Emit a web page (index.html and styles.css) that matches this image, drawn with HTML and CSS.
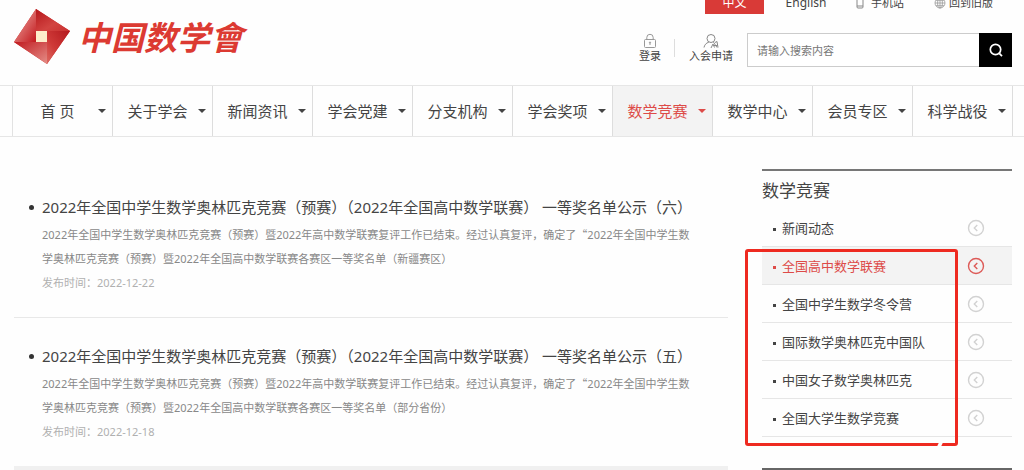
FILE: index.html
```html
<!DOCTYPE html>
<html lang="zh-CN">
<head>
  <meta charset="UTF-8">
  <meta name="viewport" content="width=device-width, initial-scale=1.0">
  <title>中国数学会</title>
  <link rel="stylesheet" href="styles.css">
</head>
<body>
  <div class="page">
    <header class="header">
      <a class="logo" href="#">
        <svg class="logo-mark" viewBox="0 0 56 56" width="56" height="56" aria-hidden="true">
          <defs>
            <linearGradient id="g1" x1="1" y1="0" x2="0" y2="1"><stop offset="0" stop-color="#b3181d"/><stop offset=".6" stop-color="#cf3a38"/><stop offset="1" stop-color="#dd6a62"/></linearGradient>
            <linearGradient id="g2" x1="0" y1="0" x2="1" y2="1"><stop offset=".2" stop-color="#e99590"/><stop offset="1" stop-color="#c2181d"/></linearGradient>
            <linearGradient id="g3" x1="0" y1="0" x2="1" y2="1"><stop offset="0" stop-color="#b5161b"/><stop offset=".6" stop-color="#d24441"/><stop offset="1" stop-color="#c9302f"/></linearGradient>
            <linearGradient id="g4" x1="0" y1="0" x2="1" y2="1"><stop offset="0" stop-color="#c01a1f"/><stop offset="1" stop-color="#e58f88"/></linearGradient>
          </defs>
          <path d="M22 0 56 22 33 55 0 33z" fill="#cb2628"/>
          <path d="M22 0V33H0z" fill="url(#g2)"/>
          <path d="M22 0 56 22H22z" fill="url(#g3)"/>
          <path d="M56 22 33 55V22z" fill="url(#g1)"/>
          <path d="M0 33H33V55z" fill="url(#g4)"/>
          <path d="M22 22H33V33H22z" fill="#fdeecb"/>
        </svg>
        <span class="logo-text">中国数学會</span>
      </a>

      <div class="header-right">
        <div class="top-links">
          <a class="lang active" href="#">中文</a>
          <a class="lang" href="#">English</a>
          <a class="top-link" href="#">
            <svg viewBox="0 0 8 12" width="8" height="12" fill="none" stroke="#888" aria-hidden="true"><rect x="1" y="1" width="6" height="10" rx="1"/><path d="M1 9h6"/></svg>
            手机站
          </a>
          <a class="top-link" href="#">
            <svg viewBox="0 0 12 12" width="12" height="12" fill="none" stroke="#999" stroke-width=".8" aria-hidden="true"><circle cx="6" cy="6" r="5"/><ellipse cx="6" cy="6" rx="2.4" ry="5"/><path d="M6 1v10M1 6h10M2 3.3h8M2 8.7h8"/></svg>
            回到旧版
          </a>
        </div>
        <div class="tools">
          <a class="tool" href="#">
            <svg viewBox="0 0 14 16" width="14" height="16" fill="none" stroke="#999" aria-hidden="true"><rect x="1.5" y="6.5" width="11" height="8" rx="1"/><path d="M3.8 6.5V4.5a3.2 3.2 0 0 1 6.4 0v2M7 9.5v2.5"/><circle cx="7" cy="9.5" r=".6"/></svg>
            登录
          </a>
          <span class="split"></span>
          <a class="tool" href="#">
            <svg viewBox="0 0 18 16" width="18" height="16" fill="none" stroke="#888" aria-hidden="true"><circle cx="9" cy="5.5" r="4"/><path d="M6.8 9.2C4 10 2.5 12 2 14.5M11.5 9.2l3.5 5.3M9 15l2-4 1.5 3.5M13 9.5l2-1 1 6M11.5 12.5h4"/></svg>
            入会申请
          </a>
          <form class="search">
            <input type="text" placeholder="请输入搜索内容" aria-label="请输入搜索内容">
            <button type="button" aria-label="搜索">
              <svg viewBox="0 0 16 16" width="16" height="16" fill="none" stroke="#fff" stroke-width="1.7" aria-hidden="true"><circle cx="7.5" cy="7.5" r="5.2"/><path d="M11.3 11.3 14 14.2"/></svg>
            </button>
          </form>
        </div>
      </div>
    </header>
  </div>

  <nav class="nav">
    <ul class="nav-list">
      <li><a href="#">首 页</a></li>
      <li><a href="#">关于学会</a></li>
      <li><a href="#">新闻资讯</a></li>
      <li><a href="#">学会党建</a></li>
      <li><a href="#">分支机构</a></li>
      <li><a href="#">学会奖项</a></li>
      <li class="active"><a href="#">数学竞赛</a></li>
      <li><a href="#">数学中心</a></li>
      <li><a href="#">会员专区</a></li>
      <li><a href="#">科学战役</a></li>
    </ul>
  </nav>

  <div class="page content">
    <main class="news">
      <article class="news-item">
        <h2><a href="#">2022年全国中学生数学奥林匹克竞赛（预赛）（2022年全国高中数学联赛） 一等奖名单公示（六）</a></h2>
        <p>2022年全国中学生数学奥林匹克竞赛（预赛）暨2022年高中数学联赛复评工作已结束。经过认真复评，确定了<span class="quote">“</span>2022年全国中学生数学奥林匹克竞赛（预赛）暨2022年全国高中数学联赛各赛区一等奖名单（新疆赛区）</p>
        <time datetime="2022-12-22">发布时间：2022-12-22</time>
      </article>
      <article class="news-item">
        <h2><a href="#">2022年全国中学生数学奥林匹克竞赛（预赛）（2022年全国高中数学联赛） 一等奖名单公示（五）</a></h2>
        <p>2022年全国中学生数学奥林匹克竞赛（预赛）暨2022年高中数学联赛复评工作已结束。经过认真复评，确定了<span class="quote">“</span>2022年全国中学生数学奥林匹克竞赛（预赛）暨2022年全国高中数学联赛各赛区一等奖名单（部分省份）</p>
        <time datetime="2022-12-18">发布时间：2022-12-18</time>
      </article>
    </main>

    <aside class="sidebar">
      <h3>数学竞赛</h3>
      <ul class="side-list">
        <li><a href="#">新闻动态</a><svg class="arrow" viewBox="0 0 18 18" aria-hidden="true"><circle cx="9" cy="9" r="7.5"/><path d="M10.3 6 7.3 9l3 3"/></svg></li>
        <li class="active"><a href="#">全国高中数学联赛</a><svg class="arrow" viewBox="0 0 18 18" aria-hidden="true"><circle cx="9" cy="9" r="7.5"/><path d="M10.3 6 7.3 9l3 3"/></svg></li>
        <li><a href="#">全国中学生数学冬令营</a><svg class="arrow" viewBox="0 0 18 18" aria-hidden="true"><circle cx="9" cy="9" r="7.5"/><path d="M10.3 6 7.3 9l3 3"/></svg></li>
        <li><a href="#">国际数学奥林匹克中国队</a><svg class="arrow" viewBox="0 0 18 18" aria-hidden="true"><circle cx="9" cy="9" r="7.5"/><path d="M10.3 6 7.3 9l3 3"/></svg></li>
        <li><a href="#">中国女子数学奥林匹克</a><svg class="arrow" viewBox="0 0 18 18" aria-hidden="true"><circle cx="9" cy="9" r="7.5"/><path d="M10.3 6 7.3 9l3 3"/></svg></li>
        <li><a href="#">全国大学生数学竞赛</a><svg class="arrow" viewBox="0 0 18 18" aria-hidden="true"><circle cx="9" cy="9" r="7.5"/><path d="M10.3 6 7.3 9l3 3"/></svg></li>
      </ul>
      <div class="highlight"></div>
      <div class="side-next"></div>
    </aside>
  </div>
</body>
</html>
```

FILE: styles.css
```css
* {
  box-sizing: border-box;
}
body {
  margin: 0;
  background: #fefefe;
  color: #444;
  font-family: "Noto Sans", "Noto Sans CJK SC", sans-serif;
  font-size: 11px;
  overflow: hidden;
}
a {
  color: inherit;
  text-decoration: none;
}
ul {
  list-style: none;
  margin: 0;
  padding: 0;
}
.page {
  padding: 0 12px 0 14px;
}

/* header */
.header {
  display: flex;
  justify-content: space-between;
  height: 85px;
}
.logo {
  display: flex;
  align-items: flex-start;
  gap: 8px;
  padding-top: 9px;
}
.logo-text {
  color: #dc3a32;
  font-family: "Noto Sans CJK SC", sans-serif;
  font-size: 33px;
  font-weight: bold;
  font-style: italic;
  line-height: 54px;
}
.header-right {
  display: flex;
  flex-direction: column;
  align-items: flex-end;
  gap: 19px;
}
.top-links {
  display: flex;
  align-items: flex-start;
  height: 14px;
  padding-right: 19px;
  line-height: 22px;
}
.top-links a {
  display: flex;
  align-items: center;
  height: 22px;
  margin-top: -8px;
}
.top-links .lang {
  justify-content: center;
  width: 59px;
  font-size: 12px;
}
.top-links .lang + .lang {
  width: 84px;
}
.top-links .lang.active {
  background: #d93a37;
  color: #fff;
}
.top-link {
  gap: 7px;
  margin-left: 8px;
}
.top-link + .top-link {
  gap: 3px;
  margin-left: 30px;
}
.tools {
  display: flex;
  align-items: flex-start;
}
.tool {
  display: flex;
  flex-direction: column;
  align-items: center;
  line-height: 16px;
}
.tool svg {
  margin-bottom: -1px;
}
.split {
  width: 1px;
  height: 18px;
  margin: 6px 14px 0 13px;
  background: #ddd;
}
.search {
  display: flex;
  height: 34px;
  margin-left: 14px;
}
.search input {
  width: 232px;
  padding: 0 9px;
  border: 1px solid #ccc;
  border-right: 0;
  background: #fff;
  font: inherit;
}
.search input::placeholder {
  color: #777;
}
.search button {
  display: flex;
  align-items: center;
  justify-content: center;
  width: 33px;
  padding: 0;
  border: 0;
  background: #000;
}

/* main menu */
.nav {
  padding: 0 11px 0 12px;
  border-top: 1px solid #e6e6e6;
  border-bottom: 1px solid #e6e6e6;
}
.nav-list {
  display: flex;
  border-left: 1px solid #e2e2e2;
}
.nav-list li {
  flex: 1;
  border-right: 1px solid #ddd;
}
.nav-list a {
  display: flex;
  align-items: center;
  justify-content: center;
  position: relative;
  height: 50px;
  padding: 0 10px 2px 0;
  font-size: 15px;
}
.nav-list a::after {
  content: "";
  position: absolute;
  right: 6px;
  top: 23px;
  border: 4px solid transparent;
  border-top-color: currentColor;
  border-bottom: 0;
}
.nav-list .active {
  background: #f3f3f3;
  color: #dd4b48;
}

/* news list */
.content {
  display: flex;
  align-items: flex-start;
  justify-content: space-between;
  gap: 34px;
}
.news {
  flex: 1;
}
.news-item {
  height: 149px;
  padding: 0 28px;
  border-bottom: 1px solid #e8e8e8;
}
.news-item:first-child {
  height: 181px;
  padding-top: 32px;
}
.news-item:last-child {
  height: 152px;
  border-bottom: 4px solid #f0f0f0;
}
.news-item h2 {
  margin: 0;
  padding-top: 25px;
  font-size: 15px;
  font-weight: normal;
  line-height: 26px;
  white-space: nowrap;
}
.news-item h2::before {
  content: "";
  float: left;
  width: 5px;
  height: 5px;
  margin: 11px 0 0 -13px;
  border-radius: 50%;
  background: #333;
}
.news-item p {
  margin: 2px 0 0;
  color: #888;
  line-height: 24px;
  text-spacing-trim: space-all;
}
.quote {
  font-family: "Noto Sans CJK SC", sans-serif;
}
.news-item time {
  display: block;
  color: #b0b0b0;
  line-height: 24px;
}

/* sidebar */
.sidebar {
  position: relative;
  width: 250px;
  margin-top: 32px;
  border-top: 2px solid #777;
}
.sidebar h3 {
  margin: 0;
  padding-top: 2px;
  font-size: 17px;
  font-weight: normal;
  line-height: 36px;
}
.side-list li {
  display: flex;
  align-items: center;
  justify-content: space-between;
  height: 38px;
  padding: 0 27px 0 11px;
  border-bottom: 1px solid #e6e6e6;
  font-size: 13px;
}
.side-list a::before {
  content: "";
  display: inline-block;
  width: 3px;
  height: 3px;
  margin-right: 6px;
  background: currentColor;
  vertical-align: middle;
}
.side-list .active {
  background: #f3f3f3;
  color: #dd4b48;
}
.arrow {
  width: 18px;
  height: 18px;
  fill: none;
  stroke: #d2d2d2;
  stroke-width: 1.4;
}
.active .arrow {
  stroke: #dd5a57;
}
/* frame lying over the competition links */
.highlight {
  position: absolute;
  left: -17px;
  top: 78px;
  width: 213px;
  height: 197px;
  border: 3px solid #ee2a20;
  border-radius: 3px;
}
.highlight::after {
  content: "";
  position: absolute;
  right: 13px;
  bottom: -4px;
  width: 4px;
  height: 5px;
  background: #fefefe;
  transform: skewX(-25deg);
}
.side-next {
  height: 2px;
  margin-top: 31px;
  background: #666;
}
```
